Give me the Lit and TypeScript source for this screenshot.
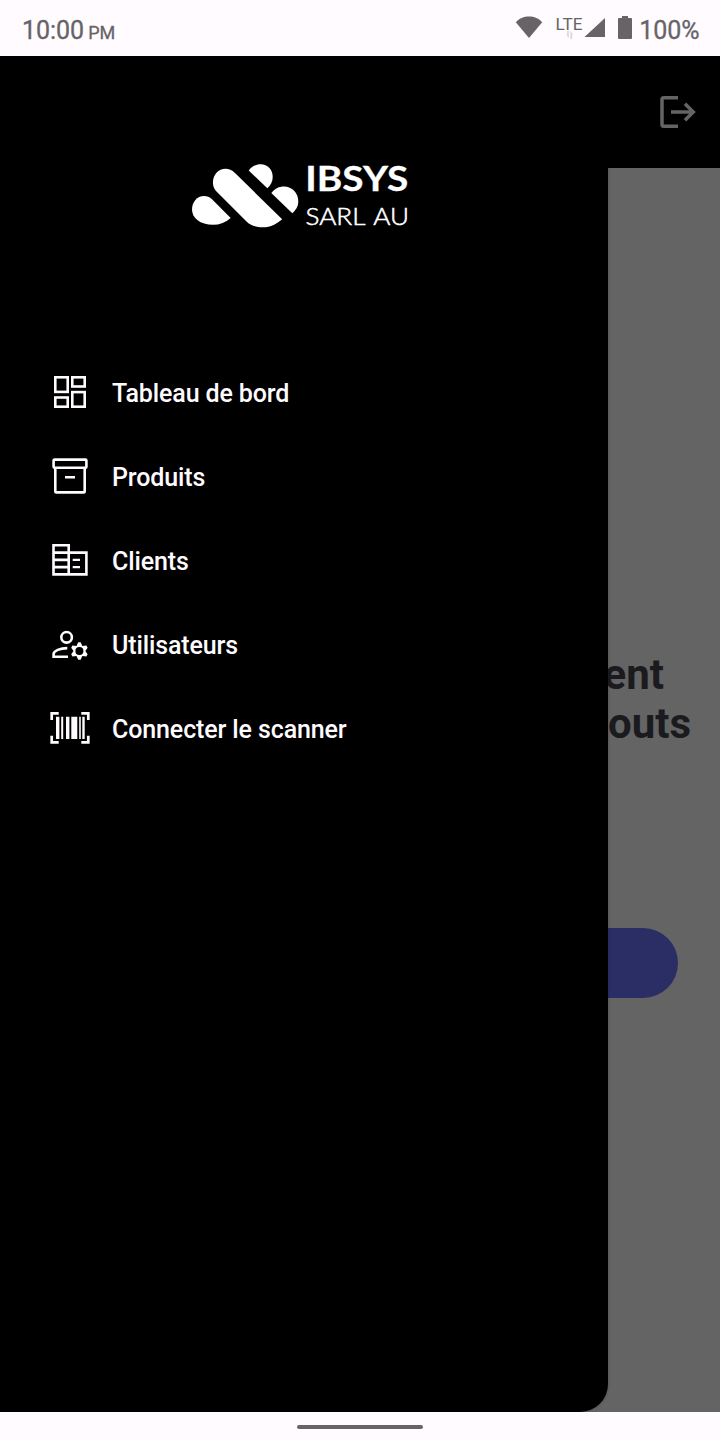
import { LitElement, html, svg, css } from "lit";
import { customElement } from "lit/decorators.js";

const menu = [
  {
    label: "Tableau de bord",
    icon: svg`<g fill="none" stroke="currentColor" stroke-width="2.6">
      <rect x="5.3" y="5.3" width="12.4" height="14.6"/><rect x="22.3" y="5.3" width="12.4" height="9.2"/>
      <rect x="5.3" y="25.5" width="12.4" height="9.2"/><rect x="22.3" y="20.1" width="12.4" height="14.6"/></g>`,
  },
  {
    label: "Produits",
    icon: svg`<g fill="none" stroke="currentColor" stroke-width="2.6">
      <rect x="3.6" y="3.6" width="32.8" height="8.2" rx="1"/>
      <path d="M5.3 12v23.4q0 1 1 1h27.4q1 0 1-1V12M15 21.2h10"/></g>`,
  },
  {
    label: "Clients",
    icon: svg`<g fill="none" stroke="currentColor" stroke-width="2.6">
      <path d="M3.5 5.3h15.2v29.1H3.5zM18.7 12.6h17.7v21.8H18.7M3.5 12.6h15.2M3.5 19.9h15.2M3.5 27.1h15.2"/>
      <path stroke-width="2.3" d="M22.7 19.9h7.3M22.7 27.1h7.3"/></g>`,
  },
  {
    label: "Utilisateurs",
    icon: svg`<g fill="none" stroke="currentColor" stroke-width="2.6">
      <circle cx="16.6" cy="13.3" r="5.3"/>
      <path d="M17.3 24.1C10 24.1 3.6 27 3.6 30v2.7H18"/></g>
      <path fill="currentColor" fill-rule="evenodd" transform="translate(29.4 27)"
        d="M-1.2-8.8h2.4L2.95-5.1 6.95-5.52 8.21-3.28 5.9 0 8.21 3.28 6.95 5.52 2.95 5.1 1.2 8.8h-2.4L-2.95 5.1-6.95 5.52-8.21 3.28-5.9 0-8.21-3.28-6.95-5.52-2.95-5.1zM-4 0a4 4 0 1 0 8 0a4 4 0 1 0-8 0z"/>`,
  },
  {
    label: "Connecter le scanner",
    icon: svg`<path fill="none" stroke="currentColor" stroke-width="2.7" d="M1.7 12V5.3h7M31.3 5.3h7V12M38.3 27.7v6.7h-7M8.7 34.4h-7v-6.7"/>
      <path fill="currentColor" d="M6 8.7h3.4V31H6zM11.2 8.7h2V31h-2zM16 8.7h3.4V31H16zM21.3 8.7h6V31h-6zM29.2 8.7h1.6V31h-1.6zM32.3 8.7h2.4V31h-2.4z"/>`,
  },
];

@customElement("app-root")
export class AppRoot extends LitElement {
  static styles = css`
    :host {
      display: flex;
      flex-direction: column;
      height: 1440px;
      width: 720px;
      overflow: hidden;
      font-family: Roboto, "Liberation Sans", sans-serif;
      background: #fffbff;
    }
    svg { display: block; flex: none; }
    .status {
      height: 56px;
      flex: none;
      box-sizing: border-box;
      padding: 4px 20.4px 0 21.9px;
      display: flex;
      align-items: center;
      justify-content: space-between;
      color: #666467;
      font-size: 25px;
      -webkit-text-stroke: 0.3px #666467;
    }
    .clock { display: flex; align-items: baseline; gap: 4px; }
    .clock small { font-size: 18px; }
    .indicators { display: flex; align-items: center; }
    .signals { margin-top: -9px; }
    .percent { margin-left: 6.5px; }
    .stage { position: relative; flex: 1; display: flex; flex-direction: column; background: #646464; overflow: hidden; }
    .bar {
      height: 112px;
      background: #000;
      display: flex;
      align-items: center;
      justify-content: flex-end;
      box-sizing: border-box;
      padding-right: 22px;
      color: #646464;
    }
    .page { padding: 482px 29px 0 0; display: flex; flex-direction: column; align-items: flex-end; }
    .title { margin: 0; font-size: 42px; line-height: 49px; font-weight: 700; color: #1b1b1f; display: flex; flex-direction: column; align-items: flex-end; }
    .first { padding-right: 27px; }
    .action { margin: 180px 13px 0 0; width: 636px; height: 70px; border-radius: 35px; background: #2a2e65; }
    .drawer {
      position: absolute;
      inset: 0 auto 0 0;
      width: 608px;
      box-sizing: border-box;
      padding-top: 94px;
      border-radius: 0 0 28px 0;
      background: #000;
      color: #fffbff;
      box-shadow: 0 0 3px rgba(0, 0, 0, 0.25);
      display: flex;
      flex-direction: column;
    }
    .logo { margin-left: 188px; overflow: visible; }
    .logo text { font-family: Lato, "Open Sans", sans-serif; }
    .menu { list-style: none; margin: 0; padding: 108px 0 0 50px; }
    .item { height: 84px; display: flex; align-items: center; gap: 22px; font-size: 25px; font-weight: 500; letter-spacing: -0.12px; }
    .label { padding-top: 3px; white-space: nowrap; }
    .gesture { height: 28px; flex: none; display: flex; align-items: center; justify-content: center; }
    .pill { width: 126px; height: 4px; border-radius: 2px; background: #666467; margin-top: 2px; }
  `;

  render() {
    return html`
      <header class="status">
        <div class="clock"><span>10:00</span><small>PM</small></div>
        <div class="indicators">
          <svg class="signals" width="118" height="30" viewBox="515 11 118 30" fill="currentColor">
            <path d="M515.8 22.3C522 14.5 536 14.5 542.2 22.3L529 38z"/>
            <text x="555.6" y="30" font-size="17" textLength="27" lengthAdjust="spacingAndGlyphs">LTE</text>
            <path opacity=".25" d="M567.2 31h1.6v7l-2.6-3.4h1zM570.5 39V31l2.6 3.4h-1V39z"/>
            <path d="M605 18v19h-20.5zM622 16h6v2h3q1 0 1 1v19q0 1-1 1h-12q-1 0-1-1V19q0-1 1-1h3z"/>
          </svg>
          <span class="percent">100%</span>
        </div>
      </header>
      <main class="stage">
        <div class="bar">
          <svg width="40" height="40" viewBox="0 0 40 40" fill="none" stroke="currentColor" stroke-width="3.5">
            <path d="M20 5.7H5.8Q4 5.7 4 7.5v25q0 1.8 1.8 1.8H20M13 20h22M27 11.7l8.3 8.3-8.3 8.3"/>
          </svg>
        </div>
        <section class="page">
          <h1 class="title"><span class="first">ent</span><span>outs</span></h1>
          <div class="action"></div>
        </section>
        <aside class="drawer">
          <svg class="logo" width="232" height="92" viewBox="188 150 232 92" fill="#fff">
            <path d="M230.7 217.9Q223 224.7 213 224.7C200 224.7 192 218 192 209.5C192 202 197 196 204 196Q208.5 196 212 199.3z"/>
            <path d="M216.5 191.5C211 186 212.5 177 216.5 172.8C221 168 229 167 235 173L282.2 219.3C274 226 269 227.3 263 227.3C255 227.3 250 225 246.5 221.5z"/>
            <path d="M248.7 170.5C252 166.3 256 164.3 260.5 164.3C268 164.3 272.7 170 272.7 177Q272.7 183.5 267.3 188.2z"/>
            <path d="M271.3 193C275 188.5 279 186.5 284 186.5C292 186.5 298.3 193 298.3 201.5Q298.3 208 292.3 213.2z"/>
            <text x="305.3" y="191.3" font-size="34.5" font-weight="700" stroke="#fff" stroke-width=".3" textLength="103" lengthAdjust="spacingAndGlyphs">IBSYS</text>
            <text x="305.5" y="224.7" font-size="22.5" font-weight="300" stroke="#fff" stroke-width=".5" word-spacing="2" textLength="103.5" lengthAdjust="spacingAndGlyphs">SARL AU</text>
          </svg>
          <ul class="menu">
            ${menu.map(
              (m) => html`<li class="item">
                <svg width="40" height="40" viewBox="0 0 40 40">${m.icon}</svg>
                <span class="label">${m.label}</span>
              </li>`
            )}
          </ul>
        </aside>
      </main>
      <footer class="gesture"><div class="pill"></div></footer>
    `;
  }
}
